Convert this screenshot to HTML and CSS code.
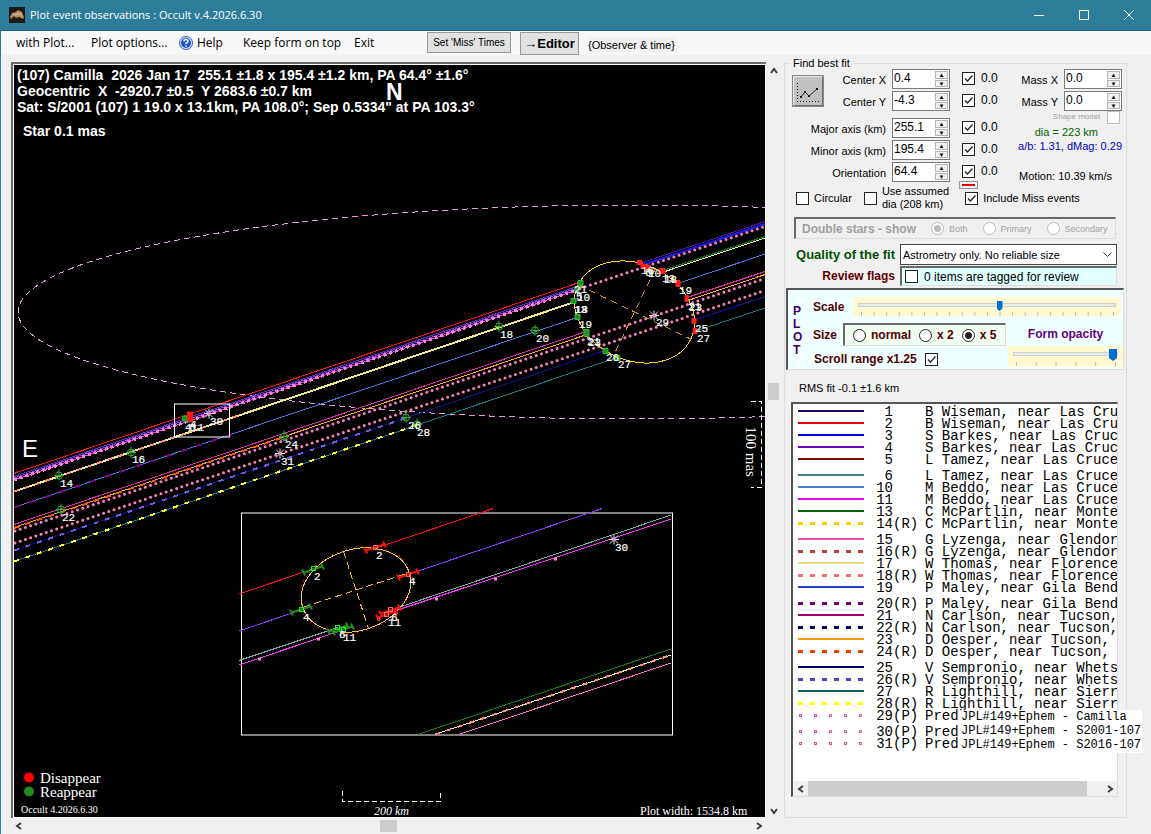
FILE: index.html
```html
<!DOCTYPE html>
<html lang="en">
<head>
<meta charset="utf-8">
<meta name="viewport" content="width=device-width, initial-scale=1">
<title>Plot event observations : Occult v.4.2026.6.30</title>
<link rel="stylesheet" href="styles.css">
</head>
<body>
<header class="titlebar">
  <svg class="app-icon" viewBox="0 0 16 16" aria-hidden="true"><rect width="16" height="16" fill="#1c1813"/><path d="M1 10 3 6 7 5 9 3 13 5 15 10 14 12 10 10 7 11 5 9 2 12Z" fill="#b58a63"/><path d="M4 7 8 6 12 6 13 9 9 8 6 9Z" fill="#d0a67c"/></svg>
  <h1>Plot event observations : Occult v.4.2026.6.30</h1>
  <div class="window-buttons">
    <button type="button" aria-label="Minimize"><svg viewBox="0 0 10 10"><path d="M0 5.500H10"/></svg></button>
    <button type="button" aria-label="Maximize"><svg viewBox="0 0 10 10"><path d="M.5.5H9.500V9.500H.5Z"/></svg></button>
    <button type="button" aria-label="Close"><svg viewBox="0 0 10 10"><path d="M0 0 10 10M10 0 0 10"/></svg></button>
  </div>
</header>
<nav class="menubar">
  <button type="button" class="menu m-plot">with Plot...</button>
  <button type="button" class="menu m-options">Plot options...</button>
  <button type="button" class="menu m-help"><svg viewBox="0 0 14 14" aria-hidden="true"><circle cx="7" cy="7" r="6.500" fill="#dfe6f8" stroke="#3a5aa8"/><circle cx="7" cy="7" r="5" fill="#1f4fd0"/><path d="M5 5.500Q5 3.500 7 3.500T9 5.300Q9 6.500 7 7.200V8.200M7 9.400V10.800" fill="none" stroke="#fff" stroke-width="1.500"/></svg>Help</button>
  <button type="button" class="menu m-keep">Keep form on top</button>
  <button type="button" class="menu m-exit">Exit</button>
  <button type="button" class="push miss-times">Set 'Miss' Times</button>
  <button type="button" class="push editor">→Editor</button>
  <span class="observer">{Observer &amp; time}</span>
</nav>
<main class="workspace">
  <section class="plot-area" aria-label="Plot">
    <div class="plot-frame">
      <svg class="plot" viewBox="14 66 751 751">
        <defs>
          <g id="miss" fill="none" stroke="#2fae2f"><circle r="3.500"/><path d="M-5 0H5M0-6V5"/></g>
          <g id="star" fill="none" stroke="#e8e8e8"><path d="M-5 0H5M0-5V5M-4-4 4 4M-4 4 4-4"/><circle r="1.500" fill="#ff80c0" stroke="none"/></g>
          <g id="bar"><path d="M-9 3 9-3M-11 0-8 6M8-6 11 0" fill="none" stroke="currentColor" stroke-width="2"/></g>
          <clipPath id="inset-clip"><path d="M239 508H672V735H239Z"/></clipPath>
        </defs>
        <rect x="14" y="66" width="751" height="751" fill="#000"/>
        <ellipse cx="634" cy="312.500" rx="616" ry="107" fill="none" stroke="#dda0dd" stroke-dasharray="6 4" class="crisp"/>
        <g class="crisp chords">
          <path d="M14 474 579 283" stroke="#ff1020"/>
          <path d="M14 477 577 287" stroke="#5a2fc8"/>
          <path d="M14 478.500 577 288.500" stroke="#8a3df0"/>
          <path d="M14 480.500 577 290.500" stroke="#ff30ff"/>
          <path d="M14 480.500 577 290.500" stroke="#ff80d0" stroke-width="3" stroke-dasharray="3 3"/>
          <path d="M14 492 573 303" stroke="#f0e890" stroke-width="2"/>
          <path d="M14 492 240 415.500" stroke="#ff9080" stroke-width="2" stroke-dasharray="5 6"/>
          <path d="M14 508 577 318" stroke="#4878e0"/>
          <path d="M14 508 240 432" stroke="#800090" stroke-width="2" stroke-dasharray="6 10"/>
          <path d="M14 525 586 332" stroke="#d8309c"/>
          <path d="M14 528 587 335" stroke="#ffa818"/>
          <path d="M14 528.500 284 437.500" stroke="#ff5a00" stroke-width="2" stroke-dasharray="6 6"/>
          <path d="M14 551 605 351" stroke="#101090"/>
          <path d="M14 551 406 418.500" stroke="#6c60e0" stroke-width="2" stroke-dasharray="5 7"/>
          <path d="M14 562 617 358" stroke="#128080"/>
          <path d="M14 562 417 425.500" stroke="#ffff20" stroke-width="2" stroke-dasharray="5 7"/>
          <path d="M640 264 765 222" stroke="#5010a0"/>
          <path d="M644 265 765 224.500" stroke="#1818f0" stroke-width="2"/>
          <path d="M660 272 765 237" stroke="#087808"/>
          <path d="M662 273 765 238.500" stroke="#ffe8c0"/>
          <path d="M678 284 765 254.500" stroke="#4878e0"/>
          <path d="M687 298 765 272" stroke="#d8309c"/>
          <path d="M688 301 765 275" stroke="#ffa818"/>
          <path d="M693 321 765 297" stroke="#101090"/>
          <path d="M695 332 765 308.500" stroke="#128080"/>
        </g>
        <g fill="none" stroke="#ff80c0" stroke-width="3" stroke-linecap="round" stroke-dasharray="0 5.500">
          <path d="M15 531.500 765 279"/><path d="M15 543.500 765 291"/><path d="M580 289 765 227"/>
        </g>
        <g transform="rotate(25.700 634.500 312.500)" fill="none" class="crisp">
          <ellipse cx="634.500" cy="312.500" rx="62.500" ry="48" stroke="#ffd020"/>
          <path d="M572 312.500H697M634.500 265V360" stroke="#d09018" stroke-dasharray="7 5"/>
        </g>
        <g fill="#228b22" stroke="#30c030"><path d="M578 281h5v5h-5zM575 287h4v5h-4zM571 299h5v5h-5zM575 315h5v5h-5zM584 330h5v7h-5zM603 349h5v5h-5zM615 356h5v5h-5z"/></g>
        <g fill="#ff2018" stroke="#ff2018"><path d="M637 261h5v4h-5zM641 265h6v4h-6zM646 266h4v6h-4zM659 269h6v5h-6zM676 281h4v6h-4zM685 296h3v6h-3zM692 319h4v5h-4zM693 329h4v5h-4z"/></g>
        <use href="#miss" x="59" y="476"/><use href="#miss" x="131" y="453"/><use href="#miss" x="61" y="510"/><use href="#miss" x="284" y="437"/><use href="#miss" x="406" y="418"/><use href="#miss" x="417" y="425"/><use href="#miss" x="499" y="327"/><use href="#miss" x="535" y="331"/>
        <use href="#star" x="209" y="414"/><use href="#star" x="280" y="454"/><use href="#star" x="654" y="316"/>
        <path d="M182 416h5v-2h3v8h-8z" fill="#18a018"/><path d="M187 412h6v11h-4l-2-5z" fill="#ff1818"/>
        <g class="labels">
          <text x="60" y="487">14</text><text x="132" y="463">16</text><text x="62" y="521">22</text><text x="210" y="425">30</text>
          <text x="185" y="431">4</text><text x="189" y="431">6</text><text x="190" y="428">4</text><text x="191" y="431">11</text>
          <text x="285" y="448">24</text><text x="281" y="465">31</text><text x="408" y="429">26</text><text x="417" y="436">28</text>
          <text x="500" y="338">18</text><text x="536" y="342">20</text>
          <text x="574" y="293">21</text><text x="576" y="300">5</text><text x="577" y="301">10</text><text x="574" y="313">13</text><text x="575" y="313">18</text>
          <text x="579" y="328">19</text><text x="587" y="345">21</text><text x="588" y="346">23</text><text x="606" y="361">26</text><text x="618" y="368">27</text>
          <text x="641" y="274">16</text><text x="645" y="276">6</text><text x="648" y="277">10</text><text x="662" y="282">13</text><text x="664" y="283">18</text><text x="679" y="294">19</text>
          <text x="688" y="310">21</text><text x="689" y="311">23</text><text x="656" y="326">29</text><text x="695" y="332">25</text><text x="697" y="342">27</text>
        </g>
        <rect x="174.500" y="404.500" width="55" height="33" fill="none" stroke="#fff"/>
        <rect x="241.500" y="513.500" width="431" height="222" fill="#000" stroke="#fff"/>
        <g clip-path="url(#inset-clip)">
          <g class="crisp chords">
            <path d="M239 594.500 313 569.500M375 549 493 509" stroke="#ff1020"/>
            <path d="M239 631.500 301 610.500M408 575 602 509" stroke="#8a40ff"/>
            <path d="M239 661 338 628M400 607.500 671 515.500" stroke="#84a8a8"/>
            <path d="M239 665.500 343 630.500M390 613 671 519.500" stroke="#ff30ff"/>
            <path d="M418 735 671 649.500" stroke="#108010"/>
            <path d="M435 735 671 655.500" stroke="#fff8a0"/>
            <path d="M435 735 671 655.500" stroke="#ff9080" stroke-width="2" stroke-dasharray="5 7"/>
            <path d="M459 735 671 663.500" stroke="#ff70c8"/>
          </g>
          <g fill="#ff80c0"><path d="M258 658h3v3h-3zM317 638h3v3h-3zM377 618h3v3h-3zM435 598h3v3h-3zM494 578h3v3h-3zM554 558h3v3h-3z"/></g>
          <g transform="rotate(-18 356 590.500)" fill="none" class="crisp">
            <ellipse cx="356" cy="590.500" rx="58" ry="42" stroke="#a02010" stroke-dasharray="1 4"/>
            <ellipse cx="356" cy="590.500" rx="56" ry="40.500" stroke="#ffc040"/>
            <path d="M301 590.500H412M356 550V631" stroke="#ffb820" stroke-dasharray="7 4"/>
          </g>
          <g color="#228b22"><use href="#bar" x="313" y="570"/><use href="#bar" x="301" y="610"/><use href="#bar" x="338" y="629"/><use href="#bar" x="343" y="630"/></g>
          <g color="#ff1010"><use href="#bar" x="375" y="548"/><use href="#bar" x="408" y="575"/><use href="#bar" x="390" y="611"/><use href="#bar" x="387" y="615"/></g>
          <g fill="none" stroke="#20f020" class="crisp"><path d="M311 567h4v4h-4zM299 608h4v4h-4zM335 626h4v4h-4zM341 628h4v4h-4z"/></g>
          <g fill="none" stroke="#f07060" class="crisp"><path d="M373 546h4v4h-4zM406 573h4v4h-4zM388 608h4v4h-4zM384 613h4v4h-4z"/></g>
        </g>
        <use href="#star" x="614" y="540"/>
        <g class="labels">
          <text x="314" y="580">2</text><text x="376" y="559">2</text><text x="303" y="621">4</text><text x="409" y="585">4</text><text x="339" y="638">6</text><text x="343" y="641">11</text><text x="391" y="621">6</text><text x="388" y="626">11</text><text x="615" y="551">30</text>
        </g>
        <g class="caption">
          <text x="17" y="80" xml:space="preserve">(107) Camilla  2026 Jan 17  255.1 ±1.8 x 195.4 ±1.2 km, PA 64.4° ±1.6°</text>
          <text x="17" y="96" xml:space="preserve">Geocentric  X  -2920.7 ±0.5  Y 2683.6 ±0.7 km</text>
          <text x="17" y="112">Sat: S/2001 (107) 1 19.0 x 13.1km, PA 108.0°; Sep 0.5334" at PA 103.3°</text>
          <text x="23" y="136">Star 0.1 mas</text>
        </g>
        <text class="north" x="386" y="100">N</text>
        <text class="compass" x="22" y="457">E</text>
        <g fill="none" stroke="#fff" stroke-dasharray="5 3" class="crisp"><path d="M751 401.500H761.500V487.500H751"/><path d="M342.500 791V801.500H440.500V791"/></g>
        <g class="serif">
          <text x="40" y="783">Disappear</text><text x="40" y="797">Reappear</text>
          <text class="tiny" x="21" y="813">Occult 4.2026.6.30</text>
          <text class="small italic" x="374" y="815">200 km</text>
          <text class="small" x="640" y="815">Plot width: 1534.8 km</text>
          <text transform="translate(746 427) rotate(90)">100 mas</text>
        </g>
        <circle cx="29" cy="778" r="5" fill="#f00"/><circle cx="29" cy="792" r="5" fill="#228b22"/>
      </svg>
    </div>
    <div class="scroll vertical">
      <button type="button" aria-label="Scroll up"><svg viewBox="0 0 8 8"><path d="M1 6 4 2 7 6"/></svg></button>
      <span class="thumb"></span>
      <button type="button" aria-label="Scroll down"><svg viewBox="0 0 8 8"><path d="M1 2 4 6 7 2"/></svg></button>
    </div>
    <div class="scroll horizontal">
      <button type="button" aria-label="Scroll left"><svg viewBox="0 0 8 8"><path d="M6 1 2 4 6 7"/></svg></button>
      <span class="thumb"></span>
      <button type="button" aria-label="Scroll right"><svg viewBox="0 0 8 8"><path d="M2 1 6 4 2 7"/></svg></button>
    </div>
  </section>

  <fieldset class="panel">
    <legend>Find best fit</legend>
    <div class="fit">
      <div class="fit-left">
        <button type="button" class="chart-button" aria-label="Fit"><svg viewBox="0 0 26 26"><path d="M3.500 5V23.500H25" stroke="#111" stroke-dasharray="1 2" fill="none"/><path d="M7 19 11 14 15 18 23 11" stroke="#222" fill="none"/><path d="M6 18h2v2H6zM10 13h2v2h-2zM14 17h2v2h-2zM22 10h2v2h-2z" fill="#111"/></svg></button>
        <label class="r1" for="cx">Center X</label><span class="spin r1"><input id="cx" value="0.4"><span><button type="button" aria-label="Center X up">▲</button><button type="button" aria-label="Center X down">▼</button></span></span><label class="check r1"><input type="checkbox" checked>0.0</label>
        <label class="r2" for="cy">Center Y</label><span class="spin r2"><input id="cy" value="-4.3"><span><button type="button" aria-label="Center Y up">▲</button><button type="button" aria-label="Center Y down">▼</button></span></span><label class="check r2"><input type="checkbox" checked>0.0</label>
        <label class="r4" for="major">Major axis (km)</label><span class="spin r4"><input id="major" value="255.1"><span><button type="button" aria-label="Major axis up">▲</button><button type="button" aria-label="Major axis down">▼</button></span></span><label class="check r4"><input type="checkbox" checked>0.0</label>
        <label class="r5" for="minor">Minor axis (km)</label><span class="spin r5"><input id="minor" value="195.4"><span><button type="button" aria-label="Minor axis up">▲</button><button type="button" aria-label="Minor axis down">▼</button></span></span><label class="check r5"><input type="checkbox" checked>0.0</label>
        <label class="r6" for="orient">Orientation</label><span class="spin r6"><input id="orient" value="64.4"><span><button type="button" aria-label="Orientation up">▲</button><button type="button" aria-label="Orientation down">▼</button></span></span><label class="check r6"><input type="checkbox" checked>0.0</label>
        <button type="button" class="red-dash" aria-label="Line colour"><span></span></button>
      </div>
      <div class="fit-right">
        <div class="mass"><label for="mx">Mass X</label><span class="spin"><input id="mx" value="0.0"><span><button type="button" aria-label="Mass X up">▲</button><button type="button" aria-label="Mass X down">▼</button></span></span></div>
        <div class="mass"><label for="my">Mass Y</label><span class="spin"><input id="my" value="0.0"><span><button type="button" aria-label="Mass Y up">▲</button><button type="button" aria-label="Mass Y down">▼</button></span></span></div>
        <label class="shape">Shape model<input type="checkbox" disabled></label>
        <output class="dia">dia = 223 km</output>
        <output class="ratio">a/b: 1.31, dMag: 0.29</output>
        <output class="motion">Motion: 10.39 km/s</output>
      </div>
    </div>
    <div class="options">
      <label class="check"><input type="checkbox">Circular</label>
      <label class="check assumed"><input type="checkbox"><span>Use assumed<br>dia (208 km)</span></label>
      <label class="check"><input type="checkbox" checked>Include Miss events</label>
    </div>
    <div class="double-stars">
      <span>Double stars - show</span>
      <label><input type="radio" name="double" checked disabled>Both</label>
      <label><input type="radio" name="double" disabled>Primary</label>
      <label><input type="radio" name="double" disabled>Secondary</label>
    </div>
    <div class="quality">
      <label class="q-label" for="quality">Quality of the fit</label>
      <select id="quality"><option>Astrometry only. No reliable size</option></select>
      <span class="r-label">Review flags</span>
      <label class="check review"><input type="checkbox">0 items are tagged for review</label>
    </div>
    <div class="plot-options">
      <div class="plot-word"><span>P</span><span>L</span><span>O</span><span>T</span></div>
      <div class="plot-controls">
        <div class="scale-row"><label for="scale">Scale</label><div class="slider"><input id="scale" type="range" min="0" max="20" value="11"><span class="ticks"></span></div></div>
        <div class="lower">
          <div class="size-col">
            <div class="size-row"><span>Size</span><div class="sizes"><label><input type="radio" name="size">normal</label><label><input type="radio" name="size">x 2</label><label><input type="radio" name="size" checked>x 5</label></div></div>
            <label class="range-row">Scroll range x1.25<input type="checkbox" checked></label>
          </div>
          <div class="opacity-col"><label for="opacity">Form opacity</label><div class="slider large"><input id="opacity" type="range" min="0" max="5" value="5"><span class="ticks"></span></div></div>
        </div>
      </div>
    </div>
    <p class="rms">RMS fit -0.1 ±1.6 km</p>
    <div class="list-wrap">
      <div class="list">
        <ol>
          <li><i class="line c1"></i><b>1</b><em></em><span>B Wiseman, near Las Cru</span></li>
          <li><i class="line c2"></i><b>2</b><em></em><span>B Wiseman, near Las Cru</span></li>
          <li><i class="line c3"></i><b>3</b><em></em><span>S Barkes, near Las Cruc</span></li>
          <li><i class="line c4"></i><b>4</b><em></em><span>S Barkes, near Las Cruc</span></li>
          <li><i class="line c5"></i><b>5</b><em></em><span>L Tamez, near Las Cruce</span></li>
          <li><i class="line c6"></i><b>6</b><em></em><span>L Tamez, near Las Cruce</span></li>
          <li><i class="line c10"></i><b>10</b><em></em><span>M Beddo, near Las Cruce</span></li>
          <li><i class="line c11"></i><b>11</b><em></em><span>M Beddo, near Las Cruce</span></li>
          <li><i class="line c13"></i><b>13</b><em></em><span>C McPartlin, near Monte</span></li>
          <li><i class="dash c14"></i><b>14</b><em>(R)</em><span>C McPartlin, near Monte</span></li>
          <li><i class="line c15"></i><b>15</b><em></em><span>G Lyzenga, near Glendor</span></li>
          <li><i class="dash c16"></i><b>16</b><em>(R)</em><span>G Lyzenga, near Glendor</span></li>
          <li><i class="line c17"></i><b>17</b><em></em><span>W Thomas, near Florence</span></li>
          <li><i class="dash c18"></i><b>18</b><em>(R)</em><span>W Thomas, near Florence</span></li>
          <li><i class="line c19"></i><b>19</b><em></em><span>P Maley, near Gila Bend</span></li>
          <li><i class="dash c20"></i><b>20</b><em>(R)</em><span>P Maley, near Gila Bend</span></li>
          <li><i class="line c21"></i><b>21</b><em></em><span>N Carlson, near Tucson,</span></li>
          <li><i class="dash c22"></i><b>22</b><em>(R)</em><span>N Carlson, near Tucson,</span></li>
          <li><i class="line c23"></i><b>23</b><em></em><span>D Oesper, near Tucson,</span></li>
          <li><i class="dash c24"></i><b>24</b><em>(R)</em><span>D Oesper, near Tucson,</span></li>
          <li><i class="line c25"></i><b>25</b><em></em><span>V Sempronio, near Whets</span></li>
          <li><i class="dash c26"></i><b>26</b><em>(R)</em><span>V Sempronio, near Whets</span></li>
          <li><i class="line c27"></i><b>27</b><em></em><span>R Lighthill, near Sierr</span></li>
          <li><i class="dash c28"></i><b>28</b><em>(R)</em><span>R Lighthill, near Sierr</span></li>
          <li><i class="dots"></i><b>29</b><em>(P)</em><span>Pred</span></li>
          <li><i class="dots"></i><b>30</b><em>(P)</em><span>Pred</span></li>
          <li><i class="dots"></i><b>31</b><em>(P)</em><span>Pred</span></li>
        </ol>
        <div class="scroll horizontal list-scroll">
          <button type="button" aria-label="Scroll list left"><svg viewBox="0 0 8 8"><path d="M6 1 2 4 6 7"/></svg></button>
          <span class="thumb"></span>
          <button type="button" aria-label="Scroll list right"><svg viewBox="0 0 8 8"><path d="M2 1 6 4 2 7"/></svg></button>
        </div>
      </div>
      <div class="ephem"><span>JPL#149+Ephem - Camilla</span><span>JPL#149+Ephem - S2001-107</span><span>JPL#149+Ephem - S2016-107</span></div>
    </div>
  </fieldset>
</main>
</body>
</html>
```
FILE: styles.css
```css
* { box-sizing: border-box; }
body { margin: 0; min-height: 100vh; display: flex; flex-direction: column; background: #f0f0f0; border-left: 1px solid #2d7d9a; color: #000; font: 12px/14px "Liberation Sans", Arial, sans-serif; }
button, input, select { font: inherit; color: inherit; margin: 0; padding: 0; border: 0; border-radius: 0; }
button { background: none; }

.titlebar { height: 31px; display: flex; align-items: center; background: #2d7d9a; color: #fff; padding-left: 8px; border-bottom: 1px solid #1c647e; }
.app-icon { width: 16px; height: 16px; margin-right: 5px; }
h1 { margin: 0; font: 11px/16px "Open Sans", "Noto Sans", sans-serif; flex: 1; }
.window-buttons { display: flex; }
.window-buttons button { width: 45px; height: 30px; display: grid; place-items: center; }
.window-buttons svg { width: 10px; height: 10px; fill: none; stroke: #fff; overflow: visible; }

.menubar { height: 24px; display: flex; align-items: flex-start; background: #f7f7f7; padding-left: 15px; font: 12px/24px "Open Sans", "Noto Sans", sans-serif; white-space: nowrap; }
.menu { text-align: left; height: 24px; }
.m-plot { width: 75px; }
.m-options { width: 88px; }
.m-help { width: 64px; display: flex; align-items: center; gap: 4px; }
.m-help svg { width: 14px; height: 14px; }
.m-keep { width: 111px; }
.m-exit { width: 73px; }
.push { background: #e1e1e1; border: 1px solid #999; font-family: "Liberation Sans", Arial, sans-serif; }
.miss-times { width: 84px; height: 21px; margin: 1px 9px 0 0; font-size: 10px; line-height: 19px; }
.editor { width: 59px; height: 23px; margin: 1px 9px 0 0; font-size: 13px; line-height: 21px; font-weight: bold; }
.observer { font: 11px/14px "Liberation Sans", Arial, sans-serif; margin-top: 7px; background: #f0f0f0; }

.workspace { flex: 1; display: grid; grid-template-columns: minmax(0, 1fr) 343px; column-gap: 3px; padding: 2px 24px 1px 10px; }
.plot-area { margin-top: 5px; display: grid; grid-template-columns: minmax(0, 1fr) 15px; grid-template-rows: minmax(0, 1fr) 16px; }
.plot-frame { background: #fff; border: solid #696969; border-width: 2px 0 0 2px; padding: 1px; display: flex; }
.plot { display: block; width: 100%; height: 100%; background: #000; }
.crisp { shape-rendering: crispEdges; }
.chords path { fill: none; }
.labels { font: 11px "Liberation Mono", monospace; fill: #fff; stroke: #fff; stroke-width: .2px; }
.caption { font: bold 14px "Liberation Sans", Arial, sans-serif; fill: #fff; white-space: pre; }
.north { font: bold 23px "Liberation Sans", Arial, sans-serif; fill: #fff; }
.compass { font: 24px "Liberation Sans", Arial, sans-serif; fill: #fff; }
.serif { font: 15px "Liberation Serif", serif; fill: #fff; }
.small { font-size: 12px; }
.tiny { font-size: 10px; }
.italic { font-style: italic; }

.scroll { display: flex; background: #f0f0f0; }
.scroll button { display: grid; place-items: center; width: 15px; height: 15px; }
.scroll svg { width: 8px; height: 8px; fill: none; stroke: #404040; stroke-width: 2; }
.scroll .thumb { background: #cdcdcd; }
.vertical { flex-direction: column; justify-content: space-between; align-items: center; padding: 1px 0 0; }
.vertical .thumb { width: 11px; height: 17px; margin-bottom: 98px; }
.horizontal { justify-content: space-between; align-items: center; }
.plot-area > .horizontal .thumb { width: 17px; height: 12px; }

.panel { min-width: 0; margin: 0 0 16px; padding: 0; border: 1px solid #dcdcdc; }
legend { margin-left: 5px; padding: 0 3px; font-size: 11px; line-height: 12px; }
.fit { display: flex; font-size: 12px; }
.fit-left { display: grid; grid-template-columns: 101px 58px 38px; column-gap: 6px; grid-template-rows: 22px 22px 5px 22px 22px 19px 8px; }
.fit-left > label:not(.check) { grid-column: 1; text-align: right; font-size: 11px; line-height: 22px; white-space: nowrap; }
.fit-left .spin { grid-column: 2; }
.fit-left .check { grid-column: 3; }
.r1 { grid-row: 1; } .r2 { grid-row: 2; } .r4 { grid-row: 4; } .r5 { grid-row: 5; } .r6 { grid-row: 6; }
.chart-button { grid-area: 1 / 1 / 3 / 2; width: 32px; height: 32px; margin: 6px 0 0 7px; background: #c0c0c0; border: 2px solid; border-color: #e8e8e8 #707070 #707070 #e8e8e8; outline: 1px solid #888; outline-offset: -1px; }
.chart-button svg { width: 26px; height: 26px; display: block; }
.spin { display: flex; width: 58px; height: 20px; background: #fff; border: 1px solid #7a7a7a; }
.spin input { min-width: 0; flex: 1; padding: 0 0 3px 1px; background: none; font-size: 12px; }
.spin span { width: 15px; display: flex; flex-direction: column; gap: 1px; padding: 1px; }
.spin button { flex: 1; min-height: 0; background: #f0f0f0; border: 1px solid #b4b4b4; font-size: 6px; line-height: 6px; overflow: hidden; }
input[type="checkbox"], input[type="radio"] { appearance: none; flex: none; width: 13px; height: 13px; background: #fff center / 11px 11px no-repeat; border: 1px solid #222; }
input[type="checkbox"]:checked { background-image: url("data:image/svg+xml,%3Csvg xmlns='http://www.w3.org/2000/svg' viewBox='0 0 11 11'%3E%3Cpath d='M2 5.500 4.500 8 9.500 2.500' fill='none' stroke='%23222' stroke-width='1.300'/%3E%3C/svg%3E"); }
input[type="radio"] { border-radius: 50%; }
input[type="radio"]:checked { background: radial-gradient(circle, #222 3px, #fff 4px); }
input:disabled { border-color: #bcbcbc; }
input[type="radio"]:disabled:checked { background: radial-gradient(circle, #bcbcbc 3px, #fff 4px); }
.check { display: flex; align-items: center; gap: 6px; white-space: nowrap; }
.fit-left .check { padding-left: 6px; height: 18px; }
.red-dash { grid-area: 7 / 3; width: 19px; height: 8px; margin-left: 3px; border: 1px solid #999; display: grid; place-items: center; background: #f4f4f4; }
.red-dash span { width: 13px; height: 2px; background: #e00000; }
.fit-right { flex: 1; display: flex; flex-direction: column; align-items: flex-end; padding-right: 4px; white-space: nowrap; font-size: 11px; }
.mass { display: flex; gap: 6px; height: 22px; line-height: 22px; }
.shape { display: flex; gap: 7px; height: 12px; font-size: 8px; line-height: 12px; color: #a0a0a0; padding-right: 2px; margin-top: -2px; }
.dia { color: #006400; margin: 2px 24px 0 0; }
.ratio { color: #0000c0; }
.motion { margin: 16px 10px 0 0; }
.options { display: flex; align-items: center; height: 28px; padding: 0 0 8px 11px; margin-top: -1px; gap: 12px; font-size: 11px; }
.options .check { gap: 5px; }
.assumed { line-height: 13px; margin-right: 4px; }
.double-stars { display: flex; align-items: center; gap: 15px; margin: 1px 10px 0 9px; height: 22px; padding-left: 6px; border: solid #696969; border-width: 2px 1px 1px 2px; border-right-color: #ddd; border-bottom-color: #ddd; color: #a0a0a0; font-size: 9px; white-space: nowrap; }
.double-stars span { font: bold 12px/14px "Liberation Sans", Arial, sans-serif; }
.double-stars label { display: flex; align-items: center; gap: 5px; }
.quality { display: grid; grid-template-columns: 110px minmax(0, 1fr); gap: 1px 5px; margin: 5px 9px 0 0; align-items: center; font-size: 12px; white-space: nowrap; }
.q-label, .r-label { font-weight: bold; text-align: right; color: #005000; }
.q-label { font-size: 13px; }
.r-label { color: #600000; }
select { appearance: none; height: 21px; width: 100%; padding: 0 2px; font-size: 11px; border: 1px solid #444; background: #fff url("data:image/svg+xml,%3Csvg xmlns='http://www.w3.org/2000/svg' viewBox='0 0 9 6'%3E%3Cpath d='M.5.5 4.500 4.500 8.500.5' fill='none' stroke='%23333'/%3E%3C/svg%3E") right 4px center / 9px 6px no-repeat; }
.review { height: 20px; padding-left: 3px; background: #e0ffff; border: solid #696969; border-width: 2px 1px 1px 2px; border-right-color: #ddd; border-bottom-color: #ddd; }
.plot-options { display: flex; margin: 2px 2px 0 1px; height: 82px; background: #f0ffff; border: solid #555; border-width: 2px 1px 1px 2px; border-right-color: #ddd; border-bottom-color: #ddd; color: #500000; font-weight: bold; }
.plot-word { width: 25px; padding: 15px 0 0 5px; display: flex; flex-direction: column; line-height: 13px; color: #400060; }
.plot-controls { flex: 1; min-width: 0; padding-top: 7px; }
.scale-row { display: flex; gap: 8px; line-height: 20px; padding-right: 2px; }
.scale-row label { width: 32px; }
.slider { flex: 1; height: 19px; background: #fff8d0; padding: 0 5px; }
.slider input { appearance: none; display: block; width: 100%; height: 16px; background: none; }
.slider input::-webkit-slider-runnable-track { height: 4px; background: #e7eaea; border: 1px solid #d0d0d0; }
.slider input::-webkit-slider-thumb { appearance: none; width: 6px; height: 10px; margin-top: -3px; background: #0070d0; clip-path: polygon(0 0, 100% 0, 100% 75%, 50% 100%, 0 75%); }
.ticks { display: block; height: 4px; margin: -1px 2px 0 3px; background: linear-gradient(90deg, #bbb 1px, transparent 1px) 0 0 / 5% 100%; border-right: 1px solid #bbb; }
.slider.large { height: 21px; }
.slider.large .ticks { background-size: 20% 100%; margin-top: 0; }
.slider.large input::-webkit-slider-thumb { width: 8px; height: 12px; margin-top: -4px; }
.lower { display: flex; justify-content: space-between; margin-top: 6px; }
.size-row { display: flex; gap: 5px; align-items: center; }
.size-row > span { width: 25px; }
.sizes { width: 163px; height: 23px; display: flex; align-items: center; gap: 8px; padding-left: 8px; background: #f0fff0; border: solid #696969; border-width: 2px 1px 1px 2px; border-right-color: #ddd; border-bottom-color: #ddd; white-space: nowrap; }
.sizes label { display: flex; align-items: center; gap: 5px; }
.range-row { display: flex; align-items: center; gap: 8px; padding: 6px 0 0 1px; white-space: nowrap; }
.opacity-col { width: 115px; color: #600080; display: flex; flex-direction: column; }
.opacity-col label { text-align: center; line-height: 23px; }
.opacity-col .slider { flex: none; }
.rms { margin: 11px 0 7px 14px; font-size: 11px; }

.list-wrap { position: relative; margin: 0 8px 20px 6px; }
.list { height: 395px; display: flex; flex-direction: column; justify-content: space-between; overflow: hidden; background: #fff; border: solid #555; border-width: 2px 1px 1px 2px; border-right-color: #ddd; border-bottom-color: #ddd; }
ol { margin: 0; padding: 2px 0 0 5px; list-style: none; font: 14px/12px "Liberation Mono", "Courier New", monospace; white-space: nowrap; }
li { display: grid; grid-template-columns: 66px 29px 32px max-content; height: 12px; }
li:nth-child(5n) { margin-bottom: 4px; }
li b { font-weight: normal; text-align: right; }
li em { font-style: normal; }
li i { height: 2px; margin-top: 4px; }
.line { background: var(--ink); }
.dash { background: repeating-linear-gradient(90deg, var(--ink) 0 5px, transparent 5px 12px); height: 3px; }
li .dots { height: 3px; background: radial-gradient(circle, #fff 0 1px, #e050a0 1px 2px, transparent 2px) -5px 0 / 15px 3px; }
.c1 { --ink: #200060; } .c2 { --ink: #e00000; } .c3 { --ink: #0000d8; } .c4 { --ink: #7000c0; } .c5 { --ink: #800000; }
.c6 { --ink: #408080; } .c10 { --ink: #4878d8; } .c11 { --ink: #e800e0; } .c13 { --ink: #006000; } .c14 { --ink: #f8d000; }
.c15 { --ink: #e850a0; } .c16 { --ink: #b84040; } .c17 { --ink: #e8e080; } .c18 { --ink: #f07070; } .c19 { --ink: #2048c0; }
.c20 { --ink: #700070; } .c21 { --ink: #a80068; } .c22 { --ink: #000058; } .c23 { --ink: #f89800; } .c24 { --ink: #f04000; }
.c25 { --ink: #000060; } .c26 { --ink: #5840b8; } .c27 { --ink: #006058; } .c28 { --ink: #ffff00; }
.list-scroll .thumb { flex: 1; height: 15px; margin-right: 15px; }
.ephem { position: absolute; left: 170px; top: 308px; width: 181px; height: 43px; display: flex; flex-direction: column; background: #fff; font: 12px/14px "Liberation Mono", "Courier New", monospace; white-space: nowrap; }
```
